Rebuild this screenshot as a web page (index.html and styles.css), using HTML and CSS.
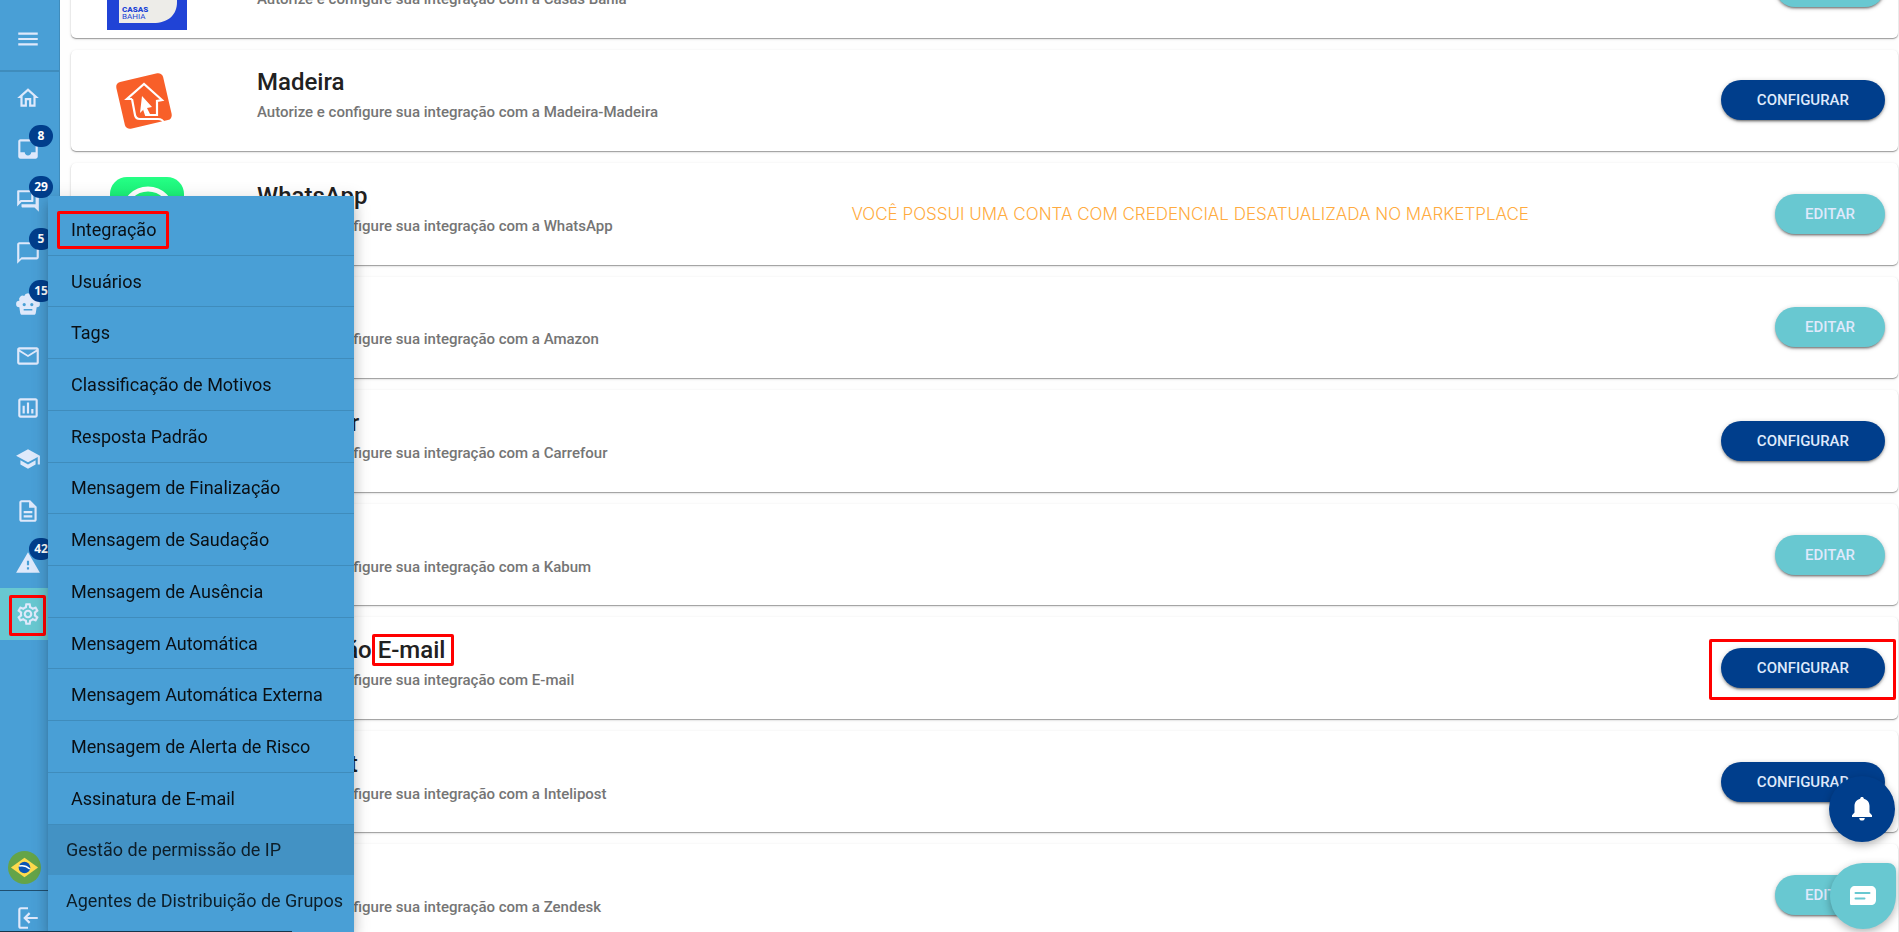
FILE: index.html
```html
<!DOCTYPE html>
<html lang="pt-BR">
<head>
    <meta charset="UTF-8">
    <meta name="viewport" content="width=device-width, initial-scale=1.0">
    <title>Integração</title>
    <link rel="stylesheet" href="styles.css">
</head>
<body>
    <aside class="sidebar">
        <button class="side-toggle" aria-label="Abrir menu">
            <svg class="icon" viewBox="0 0 24 24"><path d="M3 18h18v-2H3v2zm0-5h18v-2H3v2zm0-7v2h18V6H3z"/></svg>
        </button>
        <nav class="side-nav">
            <a href="#" aria-label="Início"><svg class="icon" viewBox="0 0 24 24"><path d="M12 5.69l5 4.5V18h-2v-6H9v6H7v-7.81l5-4.5M12 3L2 12h3v8h6v-6h2v6h6v-8h3L12 3z"/></svg></a>
            <a href="#" aria-label="Caixa de entrada"><svg class="icon" viewBox="0 0 24 24"><path d="M19 3H4.99C3.88 3 3.01 3.89 3.01 5L3 19c0 1.1.88 2 1.99 2H19c1.1 0 2-.9 2-2V5c0-1.1-.9-2-2-2zm0 12h-4c0 1.66-1.35 3-3 3s-3-1.34-3-3H4.99V5H19v10z"/></svg><span class="badge">8</span></a>
            <a href="#" aria-label="Conversas"><svg class="icon" viewBox="0 0 24 24"><path d="M15 4v7H5.17L4 12.17V4h11m1-2H3c-.55 0-1 .45-1 1v14l4-4h10c.55 0 1-.45 1-1V3c0-.55-.45-1-1-1zm5 4h-2v9H6v2c0 .55.45 1 1 1h11l4 4V7c0-.55-.45-1-1-1z"/></svg><span class="badge">29</span></a>
            <a href="#" aria-label="Mensagens"><svg class="icon" viewBox="0 0 24 24"><path d="M20 2H4c-1.1 0-2 .9-2 2v18l4-4h14c1.1 0 2-.9 2-2V4c0-1.1-.9-2-2-2zm0 14H6l-2 2V4h16v12z"/></svg><span class="badge">5</span></a>
            <a href="#" aria-label="Robô"><svg class="icon" viewBox="0 0 24 24"><path fill-rule="evenodd" d="M8.500 4.500a3.700 3.700 0 0 1 7 0 3.500 3.500 0 0 1 4.500 4.500 3 3 0 0 1 0 6l-.8 5.200c-.2 1-.9 1.800-2 1.800H6.800c-1.100 0-1.800-.8-2-1.800L4 15a3 3 0 0 1 0-6 3.500 3.500 0 0 1 4.500-4.500zM8.500 11a1.500 1.500 0 1 0 0 3 1.500 1.500 0 0 0 0-3zm7 0a1.500 1.500 0 1 0 0 3 1.500 1.500 0 0 0 0-3zM8 16.500v1.500h8v-1.500z"/></svg><span class="badge">15</span></a>
            <a href="#" aria-label="E-mail"><svg class="icon" viewBox="0 0 24 24"><path d="M22 6c0-1.1-.9-2-2-2H4c-1.1 0-2 .9-2 2v12c0 1.100.9 2 2 2h16c1.100 0 2-.9 2-2V6zm-2 0l-8 4.990L4 6h16zm0 12H4V8l8 5 8-5v10z"/></svg></a>
            <a href="#" aria-label="Relatórios"><svg class="icon" viewBox="0 0 24 24"><path d="M19 3H5c-1.100 0-2 .9-2 2v14c0 1.100.9 2 2 2h14c1.100 0 2-.9 2-2V5c0-1.100-.9-2-2-2zm0 16H5V5h14v14zM7 10h2v7H7zm4-3h2v10h-2zm4 6h2v4h-2z"/></svg></a>
            <a href="#" aria-label="Treinamento"><svg class="icon" viewBox="0 0 24 24"><path d="M5 13.180v4L12 21l7-3.820v-4L12 17l-7-3.820zM12 3L1 9l11 6 9-4.910V17h2V9L12 3z"/></svg></a>
            <a href="#" aria-label="Documentos"><svg class="icon" viewBox="0 0 24 24"><path d="M8 16h8v2H8zm0-4h8v2H8zm6-10H6c-1.100 0-2 .9-2 2v16c0 1.100.89 2 1.990 2H18c1.100 0 2-.9 2-2V8l-6-6zm4 18H6V4h7v5h5v11z"/></svg></a>
            <a href="#" aria-label="Alertas"><svg class="icon" viewBox="0 0 24 24"><path d="M1 21h22L12 2 1 21zm12-3h-2v-2h2v2zm0-4h-2v-4h2v4z"/></svg><span class="badge">42</span></a>
            <a href="#" class="active" aria-label="Configurações"><span class="mark mark-gear"><svg class="icon" viewBox="0 0 24 24"><path d="M19.430 12.980c.04-.32.07-.64.07-.98 0-.34-.03-.66-.07-.98l2.110-1.650c.19-.15.24-.42.12-.64l-2-3.460c-.09-.16-.26-.25-.44-.25-.06 0-.12.01-.17.03l-2.490 1c-.52-.4-1.080-.73-1.690-.98l-.38-2.650C14.460 2.180 14.250 2 14 2h-4c-.25 0-.46.18-.49.42l-.38 2.650c-.61.25-1.170.59-1.690.98l-2.490-1c-.06-.02-.12-.03-.18-.03-.17 0-.34.09-.43.25l-2 3.460c-.13.22-.07.49.12.64l2.110 1.650c-.04.32-.07.65-.07.98 0 .33.03.66.07.98l-2.110 1.650c-.19.15-.24.42-.12.64l2 3.460c.09.16.26.25.44.25.06 0 .12-.01.17-.03l2.490-1c.52.4 1.080.73 1.690.98l.38 2.650c.03.24.24.42.49.42h4c.25 0 .46-.18.49-.42l.38-2.650c.61-.25 1.170-.59 1.690-.98l2.490 1c.06.02.12.03.18.03.17 0 .34-.09.43-.25l2-3.460c.12-.22.07-.49-.12-.64l-2.110-1.650zm-1.980-1.710c.04.31.05.52.05.73 0 .21-.02.43-.05.73l-.14 1.130.89.7 1.080.84-.7 1.210-1.270-.51-1.040-.42-.9.68c-.43.32-.84.56-1.250.73l-1.060.43-.16 1.130-.2 1.350h-1.400l-.19-1.350-.16-1.130-1.060-.43c-.43-.18-.83-.41-1.230-.71l-.91-.7-1.060.43-1.270.51-.7-1.210 1.080-.84.89-.7-.14-1.130c-.03-.31-.05-.54-.05-.74s.02-.43.05-.73l.14-1.130-.89-.7-1.080-.84.7-1.210 1.270.51 1.040.42.9-.68c.43-.32.84-.56 1.250-.73l1.060-.43.16-1.130.2-1.350h1.390l.19 1.350.16 1.130 1.060.43c.43.18.83.41 1.230.71l.91.7 1.060-.43 1.270-.51.7 1.210-1.070.85-.89.7.14 1.130zM12 8c-2.210 0-4 1.790-4 4s1.790 4 4 4 4-1.790 4-4-1.790-4-4-4zm0 6c-1.100 0-2-.9-2-2s.9-2 2-2 2 .9 2 2-.9 2-2 2z"/></svg></span></a>
        </nav>
        <button class="side-lang" aria-label="Português">
            <svg viewBox="0 0 34 34">
                <circle cx="17" cy="17" r="17" fill="#64a449"/>
                <path d="M3 17L17 7l14 10-14 10z" fill="#ffdb4d"/>
                <circle cx="17" cy="17" r="6" fill="#0b54b4"/>
                <path d="M11.500 15.500c4-1 8 .3 11 3" fill="none" stroke="#fff" stroke-width="1.600"/>
            </svg>
        </button>
        <a href="#" class="side-exit" aria-label="Sair">
            <svg class="icon" viewBox="0 0 24 24" fill="none" stroke="#dfe9fb" stroke-width="2"><path d="M12 3H5.500C4.600 3 4 3.600 4 4.500v15c0 .9.600 1.500 1.500 1.500H12M21 12H9.500M13.500 7.500L9 12l4.500 4.500"/></svg>
        </a>
    </aside>

    <nav class="menu">
        <a href="#"><span class="mark mark-item">Integração</span></a>
        <a href="#">Usuários</a>
        <a href="#">Tags</a>
        <a href="#">Classificação de Motivos</a>
        <a href="#">Resposta Padrão</a>
        <a href="#">Mensagem de Finalização</a>
        <a href="#">Mensagem de Saudação</a>
        <a href="#">Mensagem de Ausência</a>
        <a href="#">Mensagem Automática</a>
        <a href="#">Mensagem Automática Externa</a>
        <a href="#">Mensagem de Alerta de Risco</a>
        <a href="#">Assinatura de E-mail</a>
        <a href="#" class="sub hover">Gestão de permissão de IP</a>
        <a href="#" class="sub">Agentes de Distribuição de Grupos</a>
    </nav>

    <main class="list">
        <section class="card">
            <div class="logo">
                <svg width="80" height="86" viewBox="0 0 80 86">
                    <path d="M0 0h80v86H0z" fill="#2043d6"/>
                    <path d="M12 12h58v46c0 13-9 21-24 21H12z" fill="#edece8"/>
                    <text class="logo-bold" x="15" y="68">CASAS</text>
                    <text class="logo-text" x="15" y="75">BAHIA</text>
                </svg>
            </div>
            <div class="info">
                <h2>Casas Bahia</h2>
                <p>Autorize e configure sua integração com a Casas Bahia</p>
            </div>
            <button class="btn edit">EDITAR</button>
        </section>
        <section class="card">
            <div class="logo">
                <svg width="80" height="60" viewBox="-7 -1 80 60">
                    <rect x="6" y="6" width="48" height="48" rx="5" fill="#f85f29" transform="rotate(-13 30 30)"/>
                    <path d="M18 28h-5L30 13l18 16-5 1v14h-11l-2-6M18 28l3 16c.5 3 2 4 5 4h18c3 0 5 1 6 4" fill="none" stroke="#fff" stroke-width="2.200"/>
                    <path d="M28 25l10 11-5 1 3 6-3 1-3-6-4 4z" fill="#fff"/>
                </svg>
            </div>
            <div class="info">
                <h2>Madeira</h2>
                <p>Autorize e configure sua integração com a Madeira-Madeira</p>
            </div>
            <button class="btn">CONFIGURAR</button>
        </section>
        <section class="card">
            <div class="logo">
                <svg width="74" height="74" viewBox="0 0 74 74">
                    <defs><linearGradient id="wa" x1="0" y1="0" x2="0" y2="1"><stop offset="0" stop-color="#25ff85"/><stop offset="1" stop-color="#00c853"/></linearGradient></defs>
                    <rect width="74" height="74" rx="17" fill="url(#wa)"/>
                    <circle cx="38" cy="36" r="24" fill="none" stroke="#fff" stroke-width="5"/>
                </svg>
            </div>
            <div class="info">
                <h2>WhatsApp</h2>
                <p>Autorize e configure sua integração com a WhatsApp</p>
            </div>
            <p class="warning">VOCÊ POSSUI UMA CONTA COM CREDENCIAL DESATUALIZADA NO MARKETPLACE</p>
            <button class="btn edit">EDITAR</button>
        </section>
        <section class="card">
            <div class="logo"></div>
            <div class="info">
                <h2>Amazon</h2>
                <p>Autorize e configure sua integração com a Amazon</p>
            </div>
            <button class="btn edit">EDITAR</button>
        </section>
        <section class="card">
            <div class="logo"></div>
            <div class="info">
                <h2>Carrefour</h2>
                <p>Autorize e configure sua integração com a Carrefour</p>
            </div>
            <button class="btn">CONFIGURAR</button>
        </section>
        <section class="card">
            <div class="logo"></div>
            <div class="info">
                <h2>Kabum</h2>
                <p>Autorize e configure sua integração com a Kabum</p>
            </div>
            <button class="btn edit">EDITAR</button>
        </section>
        <section class="card">
            <div class="logo"></div>
            <div class="info">
                <h2>Integração <span class="mark mark-title">E-mail</span></h2>
                <p>Autorize e configure sua integração com E-mail</p>
            </div>
            <div class="mark mark-btn"><button class="btn">CONFIGURAR</button></div>
        </section>
        <section class="card">
            <div class="logo"></div>
            <div class="info">
                <h2>Intelipost</h2>
                <p>Autorize e configure sua integração com a Intelipost</p>
            </div>
            <button class="btn">CONFIGURAR</button>
        </section>
        <section class="card">
            <div class="logo"></div>
            <div class="info">
                <h2>Zendesk</h2>
                <p>Autorize e configure sua integração com a Zendesk</p>
            </div>
            <button class="btn edit">EDITAR</button>
        </section>
    </main>

    <button class="fab fab-bell" aria-label="Notificações">
        <svg width="22" height="24" viewBox="0 0 22 24"><path d="M11 0c1.100 0 1.800.7 1.800 1.700C16.300 2.500 18.500 5.300 18.500 9v6.500l2.500 2.700V20H1v-1.800l2.500-2.700V9c0-3.700 2.200-6.500 5.700-7.300C9.200.7 9.900 0 11 0zM8.200 21h5.600c0 1.600-1.200 2.600-2.800 2.600S8.200 22.600 8.200 21z" fill="#fff"/></svg>
    </button>
    <button class="fab fab-chat" aria-label="Chat">
        <svg width="26" height="20" viewBox="0 0 26 20"><path d="M5 0h16c3 0 5 2 5 5v9c0 3-2 5-5 5H1.500C.5 19 0 18.500 0 17.500V5c0-3 2-5 5-5z" fill="#fff"/><path d="M5.500 7h14M5.500 12.500h9" stroke="#68c8d1" stroke-width="2" stroke-linecap="round"/></svg>
    </button>
    <div class="status-line"></div>
</body>
</html>
```

FILE: styles.css
```css
* {
    box-sizing: border-box;
}

body {
    margin: 0;
    height: 100vh;
    overflow: hidden;
    background-color: #fefefe;
    font-family: Roboto, sans-serif;
}

button {
    border: none;
    padding: 0;
    font-family: inherit;
    cursor: pointer;
}

a {
    color: inherit;
    text-decoration: none;
}

/* Sidebar */
.sidebar {
    position: fixed;
    top: 0;
    bottom: 0;
    left: 0;
    width: 60px;
    display: flex;
    flex-direction: column;
    background-color: #499fd6;
    border-right: 1px solid #3f8cbc;
}

.icon {
    display: block;
    width: 26px;
    height: 26px;
    fill: #dfe9fb;
}

.side-toggle {
    height: 72px;
    padding: 8px 0 0 15px;
    background: none;
    border-bottom: 2px solid #3f8cbc;
}

.side-nav {
    flex: 1;
    display: flex;
    flex-direction: column;
    margin-bottom: 292px;
}

.side-nav a {
    position: relative;
    flex: 1;
    display: flex;
    align-items: center;
    padding-left: 15px;
}

.side-nav .active {
    background-color: #68c8d1;
}

.badge {
    position: absolute;
    top: 1px;
    left: 29px;
    min-width: 24px;
    height: 22px;
    border-radius: 12px;
    background-color: #003e8c;
    color: white;
    font: bold 12px/22px "Open Sans", sans-serif;
    text-align: center;
}

.side-lang {
    position: absolute;
    left: 8px;
    bottom: 48px;
    width: 33px;
    height: 33px;
    background: none;
}

.side-exit {
    position: absolute;
    left: 0;
    right: 0;
    bottom: 0;
    height: 42px;
    padding: 14px 0 0 15px;
    border-top: 1px solid #1f4f70;
}

.side-exit .icon {
    fill: none;
}

/* Settings menu */
.menu {
    position: fixed;
    top: 196px;
    bottom: 0;
    left: 48px;
    z-index: 2;
    width: 306px;
    display: flex;
    flex-direction: column;
    padding: 8px 0 6px;
    background-color: #499fd6;
    box-shadow: 0 5px 6px -3px rgba(0, 0, 0, 0.2), 0 9px 12px 1px rgba(0, 0, 0, 0.14), 0 3px 16px 2px rgba(0, 0, 0, 0.12);
}

.menu a {
    flex: 1;
    display: flex;
    align-items: center;
    padding-left: 23px;
    border-bottom: 1px solid #3f8cbc;
    color: #0a0f14;
    font-size: 18px;
}

.menu .sub {
    padding-left: 18px;
    border-bottom: none;
    color: #0d1e29;
}

.menu .hover {
    background-color: #4392c4;
}

/* Integration cards */
.list {
    display: grid;
    grid-auto-rows: 1fr;
    gap: 12px;
    min-height: calc(100vh + 78px);
    margin: -64px 1px 0 71px;
}

.card {
    display: flex;
    align-items: center;
    padding: 0 13px 0 36px;
    border-radius: 5px;
    background-color: white;
    box-shadow: 0 1px 1px rgba(0, 0, 0, 0.32), 0 1px 3px rgba(0, 0, 0, 0.14);
}

.logo {
    width: 80px;
    margin-right: 70px;
    display: flex;
    justify-content: center;
}

.logo-bold,
.logo-text {
    fill: #2043d6;
    font-size: 8px;
}

.logo-bold {
    font-weight: 900;
}

.info {
    flex: 1;
    padding-bottom: 10px;
}

h2 {
    margin: 0;
    color: #212121;
    font-size: 24px;
    font-weight: 500;
    line-height: 34px;
}

p {
    margin: 0;
    color: #757575;
    font-size: 15px;
    font-weight: 500;
    line-height: 26px;
}

.warning {
    margin-right: 246px;
    color: #ffab40;
    font: 300 17px Inter, sans-serif;
}

.btn {
    height: 40px;
    min-width: 110px;
    padding: 0 36px;
    border-radius: 20px;
    background-color: #003e8c;
    box-shadow: 0 3px 1px -2px rgba(0, 0, 0, 0.2), 0 2px 2px rgba(0, 0, 0, 0.24), 0 1px 5px rgba(0, 0, 0, 0.2);
    color: #dfe9fb;
    font-size: 15px;
    font-weight: 500;
}

.edit {
    padding: 0 29px;
    background-color: #68c8d1;
}

/* Red highlight boxes */
.mark {
    position: relative;
}

.mark::after {
    content: "";
    position: absolute;
    border: 3px solid #ff0000;
    border-radius: 2px;
    pointer-events: none;
}

.mark-gear::after {
    inset: -6px -5px -9px -6px;
}

.mark-item::after {
    inset: -8px -13px -9px -14px;
}

.mark-title::after {
    inset: -2px -9px -2px -6px;
}

.mark-btn::after {
    inset: -9px -11px -12px -12px;
}

/* Floating buttons */
.fab {
    position: fixed;
    right: 3px;
    z-index: 3;
    width: 66px;
    height: 66px;
    display: flex;
    align-items: center;
    justify-content: center;
    border-radius: 50%;
    box-shadow: 0 3px 8px rgba(0, 0, 0, 0.3);
}

.fab-bell {
    right: 4px;
    bottom: 90px;
    background-color: #003e8c;
}

.fab-chat {
    bottom: 3px;
    border-radius: 50% 8px 50% 50%;
    background-color: #68c8d1;
}

.status-line {
    position: fixed;
    left: 0;
    bottom: 0;
    z-index: 4;
    width: 292px;
    height: 1px;
    background-color: #16364c;
}
```
